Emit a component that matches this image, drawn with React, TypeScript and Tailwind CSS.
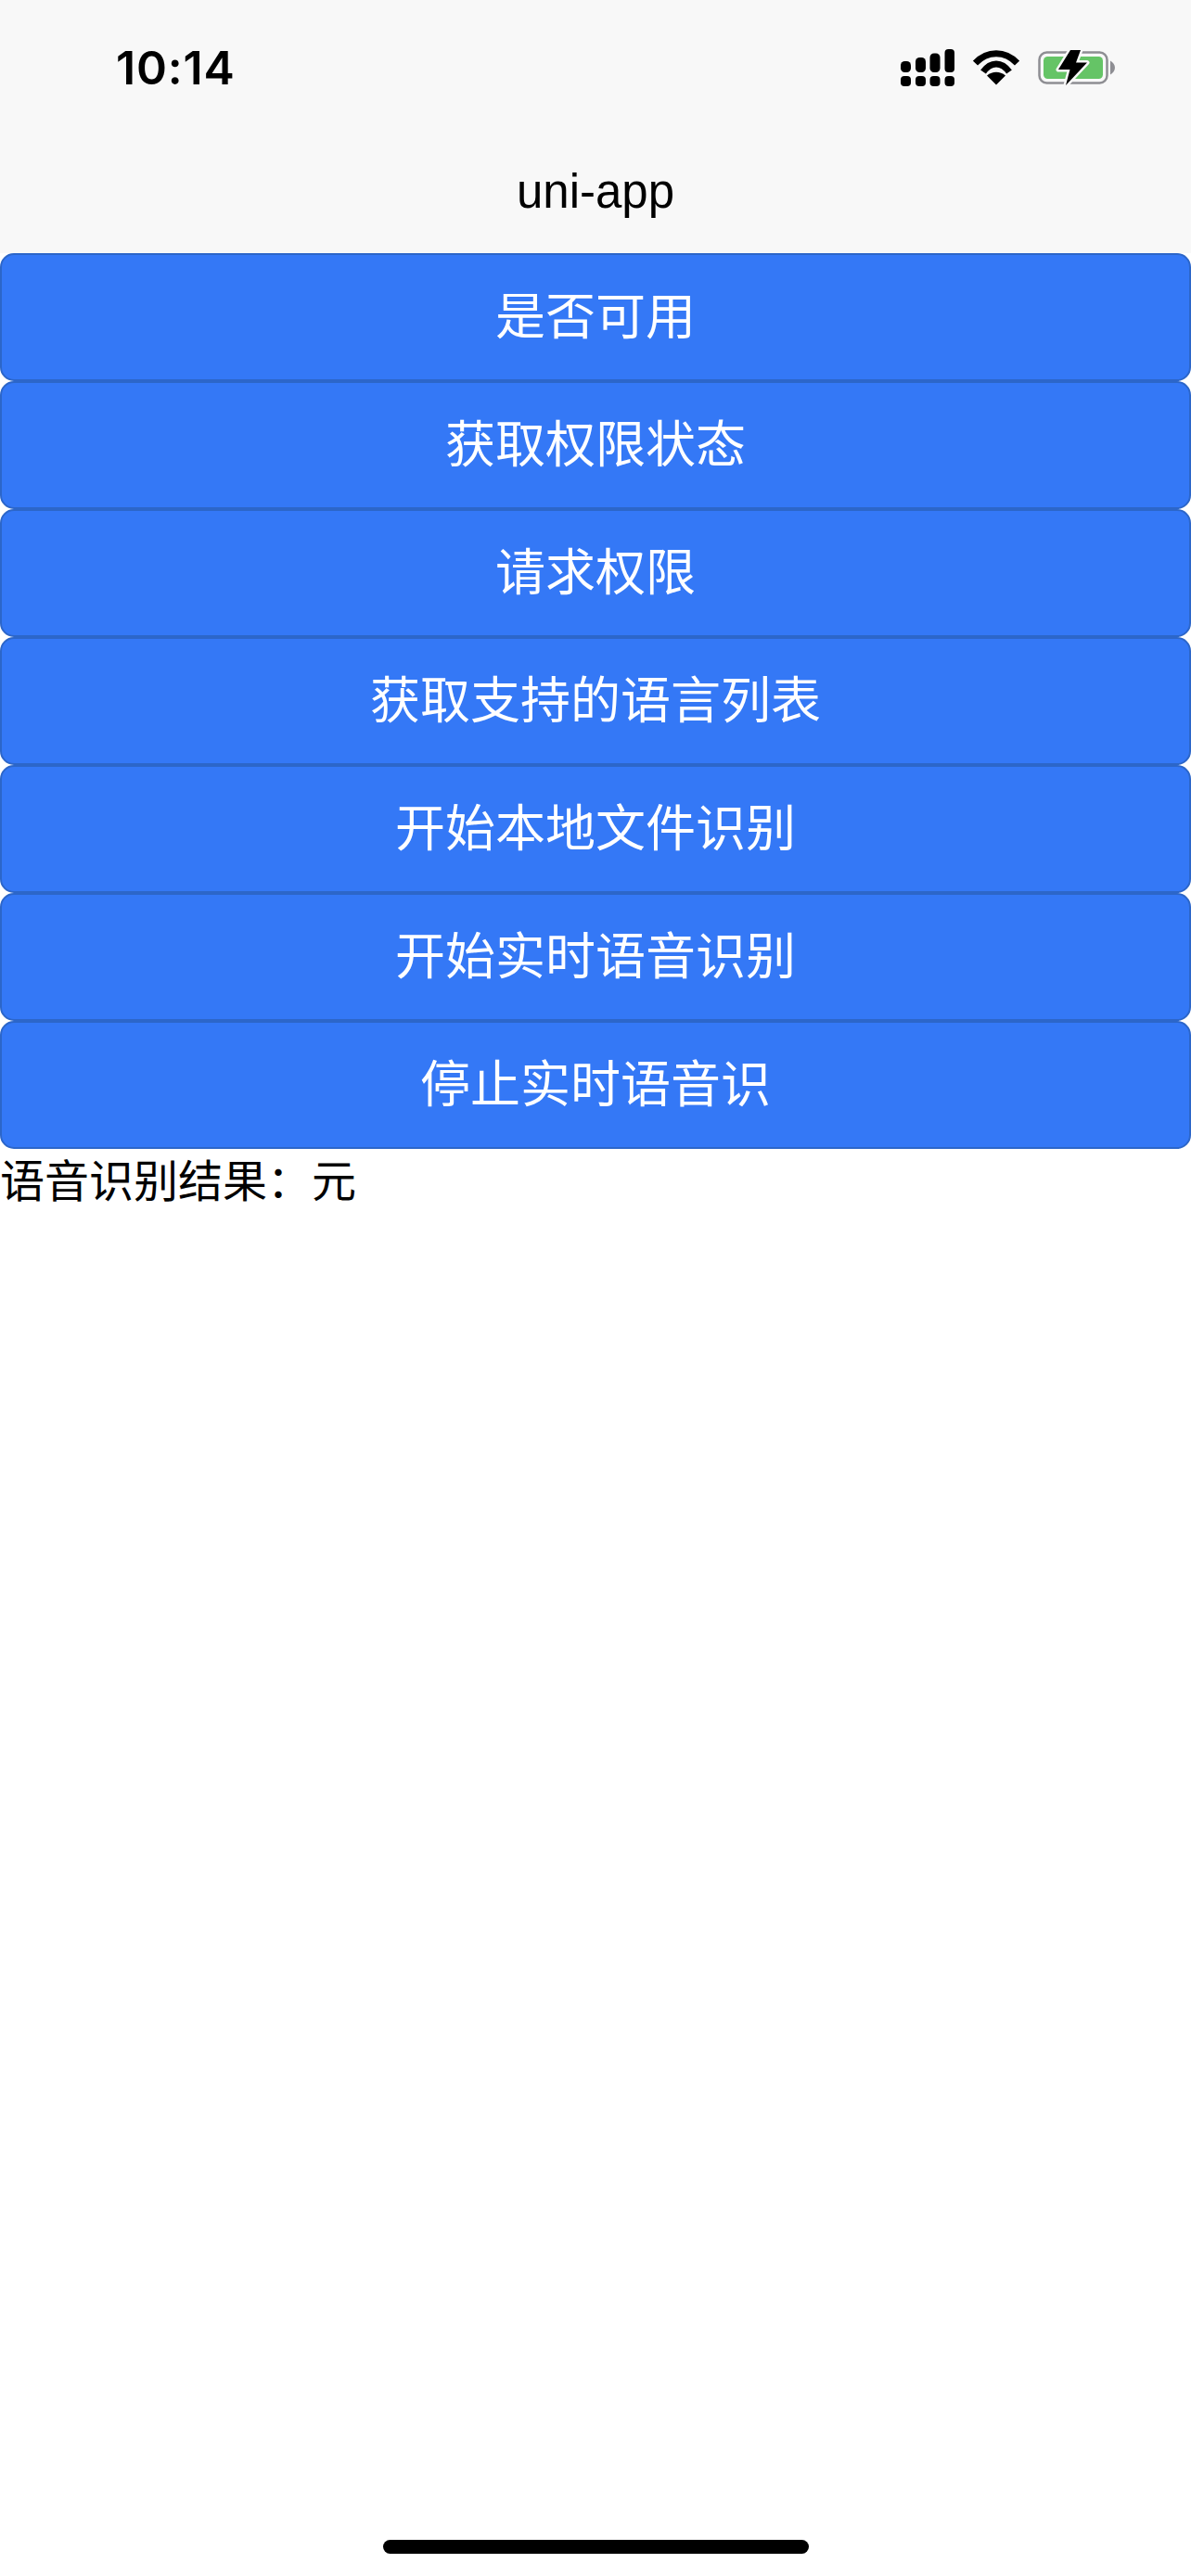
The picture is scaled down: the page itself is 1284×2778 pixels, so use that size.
import React from 'react';

const buttons = ['是否可用', '获取权限状态', '请求权限', '获取支持的语言列表', '开始本地文件识别', '开始实时语音识别', '停止实时语音识'];

const SignalIcon = () => (
  <svg width="58" height="41" viewBox="0 0 58 41" fill="#000">
    <rect x="0" y="13" width="11" height="12" rx="4.5" />
    <rect x="16" y="9" width="11" height="16" rx="4.5" />
    <rect x="31.5" y="4.5" width="11" height="20.5" rx="4.5" />
    <rect x="47.5" y="0" width="10.5" height="25" rx="4" />
    <rect x="0" y="29" width="11" height="11" rx="4" />
    <rect x="16" y="29" width="11" height="11" rx="4" />
    <rect x="31.5" y="29" width="11" height="11" rx="4" />
    <rect x="47.5" y="29" width="10.5" height="11" rx="4" />
  </svg>
);

const WifiIcon = () => (
  <svg width="50" height="38" viewBox="0 0 50 38" fill="none">
    <path d="M2.5 14C15.5 0.3 34.5 0.3 47.5 14" stroke="#000" strokeWidth="7" strokeLinecap="butt" />
    <path d="M11 23.5C19 12 31 12 39 23.5" stroke="#000" strokeWidth="7" strokeLinecap="butt" />
    <path d="M25 37.5L15 27.5C21 22.5 29 22.5 35 27.5Z" fill="#000" />
  </svg>
);

const BatteryIcon = () => (
  <svg width="83" height="40" viewBox="0 0 83 40" fill="none">
    <rect x="1.5" y="3.5" width="73" height="33" rx="8" stroke="#8e8e93" strokeWidth="2.5" />
    <rect x="6" y="8" width="64" height="24" rx="4.5" fill="#65c466" />
    <path d="M78 12.5C81 14 83 17 83 20C83 23 81 26 78 27.5Z" fill="#8e8e93" />
    <path d="M35 1L22 22H34.5L30 39L53 14.5H41L46 1Z" fill="#000" stroke="#f8f8f8" strokeWidth="5" strokeLinejoin="round" paintOrder="stroke" />
  </svg>
);

export default function App() {
  return (
    <div className="relative h-[2778px] w-[1284px] overflow-hidden bg-white font-['Liberation_Sans','Noto_Sans_CJK_SC',sans-serif] text-black">
      <header className="bg-[#f8f8f8]">
        <div className="flex h-[132px] items-center justify-between pt-[14px] pl-[125px] pr-[82px]">
          <span className="font-['Inter',sans-serif] text-[50px] font-semibold tracking-[0.8px]">10:14</span>
          <div className="flex items-center gap-[20px]">
            <SignalIcon />
            <WifiIcon />
            <BatteryIcon />
          </div>
        </div>
        <div className="flex h-[141px] items-center justify-center pt-[10px] text-[51px]">uni-app</div>
      </header>

      <main>
        {buttons.map((label) => (
          <button
            key={label}
            className="box-border flex h-[138px] w-full items-center justify-center rounded-[15px] border-2 border-[#2c66c9] bg-[#3478f6] text-[54px] text-white"
          >
            {label}
          </button>
        ))}
        <p className="text-[48px] leading-[72px]">语音识别结果：元</p>
      </main>

      <div className="absolute bottom-[24px] left-[413px] h-[15px] w-[459px] rounded-full bg-black" />
    </div>
  );
}
